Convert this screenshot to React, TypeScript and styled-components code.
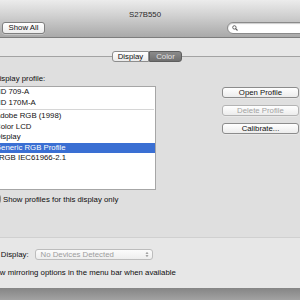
import React from "react";
import styled, { createGlobalStyle } from "styled-components";

const GlobalStyle = createGlobalStyle`
  html, body {
    margin: 0;
    padding: 0;
  }
  body {
    width: 300px;
    height: 300px;
    overflow: hidden;
    font-family: "Liberation Sans", Arial, sans-serif;
    font-size: 7.8px;
    color: #0e0e0e;
  }
`;

const Screen = styled.div`
  width: 300px;
  height: 300px;
  overflow: hidden;
  display: flex;
  flex-direction: column;
`;

const Window = styled.div`
  width: 370px;
  height: 288px;
  flex-shrink: 0;
  margin-left: -40px;
  background: #e7e7e7;
  display: flex;
  flex-direction: column;
`;

const Desktop = styled.div`
  flex: 1;
  background: linear-gradient(#858585, #a2a2a2);
`;

const Toolbar = styled.div`
  height: 38px;
  padding-top: 10px;
  box-sizing: border-box;
  border-bottom: 1px solid #7d7d7d;
  background: linear-gradient(#ececec, #d2d2d2 40%, #a9a9a9);
  display: flex;
  flex-direction: column;
  flex-shrink: 0;
`;

const Title = styled.div`
  height: 10px;
  line-height: 10px;
  text-align: center;
  color: #2a2a2a;
`;

const ToolRow = styled.div`
  margin-top: 2px;
  display: flex;
  align-items: center;
  padding-left: 42px;
`;

const PushButton = styled.div<{ $disabled?: boolean; $w: number }>`
  width: ${(p) => p.$w}px;
  height: 11px;
  box-sizing: border-box;
  border: 1px solid ${(p) => (p.$disabled ? "#b4b4b4" : "#8c8c8c")};
  border-radius: 3px;
  background: linear-gradient(#ffffff, #ececec);
  box-shadow: 0 0.5px 0 rgba(255, 255, 255, 0.6);
  color: ${(p) => (p.$disabled ? "#a2a2a2" : "#111")};
  line-height: 9px;
  text-align: center;
  white-space: nowrap;
`;

const ToolButton = styled(PushButton)`
  height: 12px;
  line-height: 10px;
  border-color: #7e7e7e;
`;

const Search = styled.div`
  width: 90px;
  height: 10px;
  margin-left: auto;
  margin-right: 7px;
  border: 1px solid #8a8a8a;
  border-radius: 6px;
  background: #fff;
  box-shadow: inset 0 1px 1px rgba(0, 0, 0, 0.2);
  display: flex;
  align-items: center;
  padding-left: 4px;
`;

const Content = styled.div`
  padding-top: 18px;
  display: flex;
  flex-direction: column;
`;

const Group = styled.div`
  position: relative;
  margin-left: 20px;
  width: 334px;
  height: 182px;
  box-sizing: border-box;
  background: #dfdfdf;
  border: 1px solid #d0d0d0;
  border-top-color: #a3a3a3;
  display: flex;
  padding: 17px 0 0 9px;
`;

const Tabs = styled.div`
  position: absolute;
  top: -6px;
  left: 50%;
  transform: translateX(-50%);
  display: flex;
`;

const Tab = styled.div<{ $active?: boolean; $w: number }>`
  width: ${(p) => p.$w}px;
  height: 11px;
  box-sizing: border-box;
  line-height: 9px;
  text-align: center;
  border: 1px solid ${(p) => (p.$active ? "#5e5e5e" : "#8d8d8d")};
  background: ${(p) =>
    p.$active ? "linear-gradient(#8b8b8b, #6f6f6f)" : "linear-gradient(#ffffff, #ebebeb)"};
  color: ${(p) => (p.$active ? "#e4e4e4" : "#111")};
  border-radius: ${(p) => (p.$active ? "0 3px 3px 0" : "3px 0 0 3px")};
`;

const LeftCol = styled.div`
  width: 166px;
  display: flex;
  flex-direction: column;
`;

const Label = styled.div`
  line-height: 10px;
  height: 10px;
  margin-left: 4px;
  margin-bottom: 2px;
  white-space: nowrap;
`;

const List = styled.div`
  height: 104px;
  box-sizing: border-box;
  border: 1px solid #a6a6a6;
  background: #fff;
  display: flex;
  flex-direction: column;
`;

const Row = styled.div<{ $selected?: boolean }>`
  height: 10.5px;
  line-height: 10.5px;
  padding-left: 4px;
  white-space: nowrap;
  background: ${(p) => (p.$selected ? "#3a6fd3" : "transparent")};
  color: ${(p) => (p.$selected ? "#fff" : "#111")};
`;

const Separator = styled.div`
  height: 3px;
  box-sizing: border-box;
  border-top: 1px solid transparent;
  &::after {
    content: "";
    display: block;
    height: 1px;
    margin-right: 1px;
    background: #d6d6d6;
  }
`;

const CheckRow = styled.div<{ $indent: number }>`
  height: 10px;
  margin-top: 4px;
  margin-left: ${(p) => p.$indent}px;
  display: flex;
  align-items: center;
  gap: 2px;
  white-space: nowrap;
`;

const Checkbox = styled.div`
  width: 8px;
  height: 8px;
  box-sizing: border-box;
  border: 1px solid #8d8d8d;
  border-radius: 1.5px;
  background: linear-gradient(#ffffff, #e9e9e9);
  flex-shrink: 0;
`;

const RightCol = styled.div`
  margin-left: 66px;
  padding-top: 13px;
  display: flex;
  flex-direction: column;
  gap: 7px;
`;

const FooterRow = styled.div`
  padding-left: 14px;
  display: flex;
  align-items: center;
  white-space: nowrap;
`;

const DisplayRow = styled(FooterRow)`
  margin-top: 11px;
  height: 10px;
  gap: 6px;
`;

const Popup = styled.div`
  width: 118px;
  height: 11px;
  box-sizing: border-box;
  border: 1px solid #bdbdbd;
  border-radius: 3px;
  background: linear-gradient(#fbfbfb, #eeeeee);
  color: #9c9c9c;
  line-height: 9px;
  padding: 0 3px 0 5px;
  display: flex;
  align-items: center;
  justify-content: space-between;
`;

const MirrorRow = styled(FooterRow)`
  margin-top: 8px;
  height: 10px;
  gap: 3px;
  padding-left: 15px;
`;

const profiles = ["Adobe RGB (1998)", "Color LCD", "Display", "Generic RGB Profile", "sRGB IEC61966-2.1"];

export default function App() {
  return (
    <>
      <GlobalStyle />
      <Screen>
        <Window>
          <Toolbar>
            <Title>S27B550</Title>
            <ToolRow>
              <ToolButton $w={43}>Show All</ToolButton>
              <Search>
                <svg width="6" height="6" viewBox="0 0 6 6">
                  <circle cx="2.4" cy="2.4" r="1.7" fill="none" stroke="#555" strokeWidth="0.9" />
                  <path d="M3.6 3.6 L5.5 5.5" stroke="#555" strokeWidth="1.1" />
                </svg>
              </Search>
            </ToolRow>
          </Toolbar>
          <Content>
            <Group>
              <Tabs>
                <Tab $w={37}>Display</Tab>
                <Tab $w={33} $active>
                  Color
                </Tab>
              </Tabs>
              <LeftCol>
                <Label>Display profile:</Label>
                <List>
                  <Row>HD 709-A</Row>
                  <Row>HD 170M-A</Row>
                  <Separator />
                  {profiles.map((p) => (
                    <Row key={p} $selected={p === "Generic RGB Profile"}>
                      {p}
                    </Row>
                  ))}
                </List>
                <CheckRow $indent={3}>
                  <Checkbox />
                  <span>Show profiles for this display only</span>
                </CheckRow>
              </LeftCol>
              <RightCol>
                <PushButton $w={77}>Open Profile</PushButton>
                <PushButton $w={77} $disabled>
                  Delete Profile
                </PushButton>
                <PushButton $w={77}>Calibrate...</PushButton>
              </RightCol>
            </Group>
            <DisplayRow>
              <span>AirPlay Display:</span>
              <Popup>
                <span>No Devices Detected</span>
                <svg width="4" height="7" viewBox="0 0 4 7">
                  <path d="M0.5 2.8 L2 1 L3.5 2.8 Z M0.5 4.2 L2 6 L3.5 4.2 Z" fill="#8a8a8a" />
                </svg>
              </Popup>
            </DisplayRow>
            <MirrorRow>
              <Checkbox />
              <span>Show mirroring options in the menu bar when available</span>
            </MirrorRow>
          </Content>
        </Window>
        <Desktop />
      </Screen>
    </>
  );
}
